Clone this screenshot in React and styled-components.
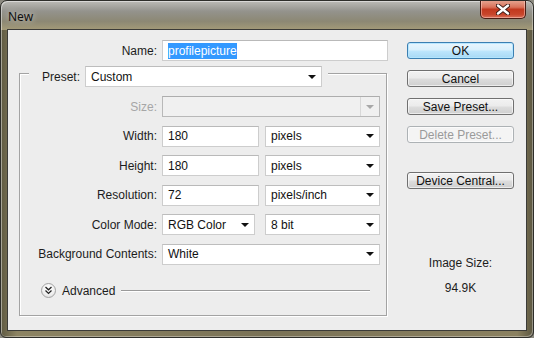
import React from 'react'
import styled, { createGlobalStyle } from 'styled-components'

const Global = createGlobalStyle`
  html, body { margin: 0; padding: 0; background: #8c8a80; }
  body { font-family: "Liberation Sans", Arial, sans-serif; }
`

const Window = styled.div`
  width: 534px;
  height: 338px;
  box-sizing: border-box;
  border: 1px solid #2e2e2a;
  border-radius: 7px 7px 6px 6px;
  background:
    linear-gradient(180deg, #bcbbb6 0%, #94938d 35%, #8c8874 70%, #a49b78 100%) top / 100% 29px no-repeat,
    linear-gradient(90deg, #5f5a42 0%, #8d8463 3%, #7a7256 50%, #8b8160 97%, #5c5741 100%);
  box-shadow: inset 1px 1px 0 rgba(255,255,255,0.45), inset -1px -1px 0 rgba(255,255,255,0.35);
  display: flex;
  flex-direction: column;
  padding: 0 6px 6px 6px;
  overflow: hidden;
`

const TitleBar = styled.div`
  height: 28px;
  display: flex;
  justify-content: space-between;
  align-items: flex-start;
`

const Title = styled.span`
  font-family: "Noto Sans", "Liberation Sans", sans-serif;
  font-size: 12px;
  color: #111;
  padding: 7px 0 0 1px;
  text-shadow: 0 0 6px rgba(255,255,255,0.7);
`

const Close = styled.div`
  width: 44px;
  height: 18px;
  margin: -1px 1px 0 0;
  border: 1px solid #4a1d14;
  border-top: none;
  border-radius: 0 0 5px 5px;
  background: linear-gradient(180deg, #e7a895 0%, #d9725a 40%, #c2391f 52%, #c8452b 80%, #d9705a 100%);
  box-shadow: inset 0 0 0 1px rgba(255,210,200,0.5);
  display: flex;
  align-items: center;
  justify-content: center;
`

const Dialog = styled.div`
  flex: 1;
  border: 1px solid #3b3b38;
  background: #ededed;
  display: flex;
  align-items: flex-start;
`

const LeftPane = styled.div`
  width: 379px;
  display: flex;
  flex-direction: column;
`

const NameRow = styled.div`
  display: grid;
  grid-template-columns: 149px 226px;
  column-gap: 5px;
  align-items: center;
  margin-top: 10px;
`

const Label = styled.label`
  font-size: 12px;
  color: ${p => (p.$disabled ? '#a6a6a6' : '#1c1c1c')};
  text-align: right;
  white-space: nowrap;
`

const TextBox = styled.div`
  box-sizing: border-box;
  height: 21px;
  width: ${p => (p.$w ? p.$w + 'px' : 'auto')};
  background: #fff;
  border: 1px solid #cdcdcd;
  border-top-color: #b9b9b9;
  padding: 0 0 0 5px;
  display: flex;
  align-items: center;
  font-size: 12px;
  color: #111;
`

const Selected = styled.span`
  background: #3399ff;
  color: #fff;
  padding: 1px 0;
`

const Select = styled.div`
  box-sizing: border-box;
  height: 21px;
  width: ${p => (p.$w ? p.$w + 'px' : 'auto')};
  background: ${p => (p.$disabled ? '#f0f0f0' : '#fff')};
  border: 1px solid ${p => (p.$disabled ? '#b8b8b8' : '#cdcdcd')};
  border-top-color: ${p => (p.$disabled ? '#adadad' : '#bdbdbd')};
  padding: 0 0 0 5px;
  display: flex;
  align-items: center;
  font-size: 12px;
  color: #111;
`

const SelectText = styled.span`
  flex: 1;
`

const ArrowBox = styled.div`
  width: 18px;
  height: 100%;
  display: flex;
  align-items: center;
  justify-content: center;
  border-left: 1px solid ${p => (p.$disabled ? '#d8d8d8' : 'transparent')};
`

const Arrow = styled.div`
  width: 0;
  height: 0;
  border-left: 4px solid transparent;
  border-right: 4px solid transparent;
  border-top: 4px solid ${p => (p.$disabled ? '#a8a8a8' : '#111')};
`

const Group = styled.div`
  box-sizing: border-box;
  margin: 12px 0 0 11px;
  width: 368px;
  height: 243px;
  border: 1px solid #a3a3a3;
  box-shadow: 1px 1px 0 #fff, inset 1px 1px 0 #fff;
  display: flex;
  flex-direction: column;
`

const GroupHeader = styled.div`
  align-self: flex-start;
  margin: -8px 0 0 9px;
  padding: 0 6px 0 0;
  background: #ededed;
  display: flex;
  align-items: center;
  gap: 5px;
`

const HeaderLabel = styled(Label)`
  width: 51px;
`

const FormGrid = styled.div`
  display: grid;
  grid-template-columns: 137px 218px;
  column-gap: 5px;
  row-gap: 8.5px;
  grid-auto-rows: 21px;
  align-items: center;
  margin-top: 9px;
`

const Pair = styled.div`
  display: flex;
  justify-content: space-between;
`

const AdvancedRow = styled.div`
  display: flex;
  align-items: center;
  margin: 19px 16px 0 21px;
  height: 14px;
`

const RoundButton = styled.div`
  box-sizing: border-box;
  width: 15px;
  height: 15px;
  border-radius: 50%;
  border: 1px solid #a2a2a2;
  background: radial-gradient(circle at 50% 35%, #ffffff 0%, #f1f1f1 55%, #d6d6d6 100%);
  display: flex;
  align-items: center;
  justify-content: center;
`

const AdvancedText = styled.span`
  font-size: 12px;
  color: #1c1c1c;
  margin: 0 6px 0 6px;
`

const Rule = styled.div`
  flex: 1;
  height: 1px;
  background: #9a9a9a;
  box-shadow: 0 1px 0 #fff;
`

const RightPane = styled.div`
  width: 107px;
  margin-left: 20px;
  padding-top: 12px;
  display: flex;
  flex-direction: column;
`

const Button = styled.div`
  box-sizing: border-box;
  height: 17px;
  margin-bottom: ${p => p.$gap || 11}px;
  border: 1px solid ${p => (p.$default ? '#3c7fb1' : p.$disabled ? '#adb2b5' : '#707070')};
  border-radius: 3px;
  background: ${p =>
    p.$default
      ? 'linear-gradient(180deg, #eaf6fd 0%, #d9f0fc 48%, #bee6fd 52%, #a7d9f5 100%)'
      : p.$disabled
      ? '#f4f4f4'
      : 'linear-gradient(180deg, #f2f2f2 0%, #ebebeb 48%, #dddddd 52%, #cfcfcf 100%)'};
  box-shadow: inset 0 0 0 1px ${p => (p.$default ? 'rgba(180,230,255,0.9)' : 'rgba(255,255,255,0.6)')};
  font-size: 12px;
  color: ${p => (p.$disabled ? '#9a9a9a' : '#111')};
  display: flex;
  align-items: center;
  justify-content: center;
  line-height: 1;
`

const InfoText = styled.div`
  font-size: 12px;
  color: #1c1c1c;
  text-align: center;
  margin-top: ${p => p.$top}px;
`

const Dropdown = ({ value, w, disabled }) => (
  <Select $w={w} $disabled={disabled}>
    <SelectText>{value}</SelectText>
    <ArrowBox $disabled={disabled}>
      <Arrow $disabled={disabled} />
    </ArrowBox>
  </Select>
)

const App = () => {
  return (
    <>
      <Global />
      <Window>
        <TitleBar>
          <Title>New</Title>
          <Close>
            <svg width="14" height="11" viewBox="0 0 14 11">
              <path d="M2 1.5 L12 9.5 M12 1.5 L2 9.5" stroke="#3a1a14" strokeWidth="4.2" strokeLinecap="round" />
              <path d="M2 1.5 L12 9.5 M12 1.5 L2 9.5" stroke="#fff" strokeWidth="2.4" strokeLinecap="round" />
            </svg>
          </Close>
        </TitleBar>
        <Dialog>
          <LeftPane>
            <NameRow>
              <Label>Name:</Label>
              <TextBox>
                <Selected>profilepicture</Selected>
              </TextBox>
            </NameRow>
            <Group>
              <GroupHeader>
                <HeaderLabel>Preset:</HeaderLabel>
                <Dropdown value="Custom" w={237} />
              </GroupHeader>
              <FormGrid>
                <Label $disabled>Size:</Label>
                <Dropdown value="" disabled />
                <Label>Width:</Label>
                <Pair>
                  <TextBox $w={97}>180</TextBox>
                  <Dropdown value="pixels" w={115} />
                </Pair>
                <Label>Height:</Label>
                <Pair>
                  <TextBox $w={97}>180</TextBox>
                  <Dropdown value="pixels" w={115} />
                </Pair>
                <Label>Resolution:</Label>
                <Pair>
                  <TextBox $w={97}>72</TextBox>
                  <Dropdown value="pixels/inch" w={115} />
                </Pair>
                <Label>Color Mode:</Label>
                <Pair>
                  <Dropdown value="RGB Color" w={93} />
                  <Dropdown value="8 bit" w={115} />
                </Pair>
                <Label>Background Contents:</Label>
                <Dropdown value="White" />
              </FormGrid>
              <AdvancedRow>
                <RoundButton>
                  <svg width="9" height="9" viewBox="0 0 9 9">
                    <path d="M1.5 1 L4.5 3.8 L7.5 1 M1.5 4.6 L4.5 7.4 L7.5 4.6" stroke="#222" strokeWidth="1.3" fill="none" />
                  </svg>
                </RoundButton>
                <AdvancedText>Advanced</AdvancedText>
                <Rule />
              </AdvancedRow>
            </Group>
          </LeftPane>
          <RightPane>
            <Button $default>OK</Button>
            <Button>Cancel</Button>
            <Button>Save Preset...</Button>
            <Button $disabled $gap={29}>Delete Preset...</Button>
            <Button>Device Central...</Button>
            <InfoText $top={56}>Image Size:</InfoText>
            <InfoText $top={11}>94.9K</InfoText>
          </RightPane>
        </Dialog>
      </Window>
    </>
  )
}

export default App
